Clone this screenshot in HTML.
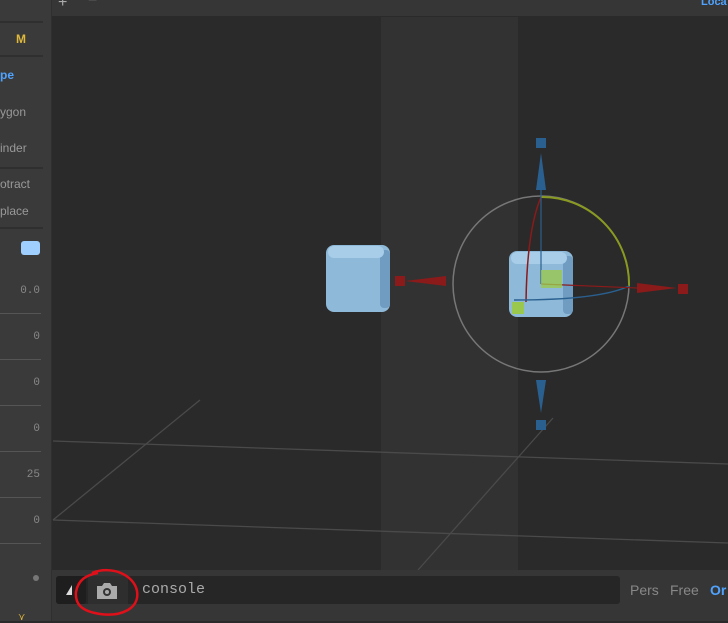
<!DOCTYPE html>
<html><head><style>
body{margin:0;width:728px;height:621px;overflow:hidden;background:#2a2a2a;font-family:"Liberation Sans",sans-serif;position:relative}
.a{position:absolute}
.side{left:0;top:0;width:51px;height:621px;background:#3a3a3a;border-right:1px solid #2f2f2f}
.sep{position:absolute;left:0;width:43px;height:2px;background:#2f2f2f}
.sep2{position:absolute;left:0;width:41px;height:1px;background:#555}
.n{position:absolute;right:11px;color:#888;font-size:11px;font-family:"Liberation Mono",monospace}
</style></head><body>
<div class="a side">
<div class="sep" style="top:21px"></div>
<div class="a" style="left:16px;top:32px;color:#e0b83a;font-size:12px;font-weight:bold">M</div>
<div class="sep" style="top:55px"></div>
<div class="a" style="left:0;top:68px;color:#4fa3ff;font-size:12px;font-weight:bold">pe</div>
<div class="a" style="left:0;top:105px;color:#999;font-size:12px">ygon</div>
<div class="a" style="left:0;top:141px;color:#999;font-size:12px">inder</div>
<div class="sep" style="top:167px"></div>
<div class="a" style="left:0;top:177px;color:#999;font-size:12px">otract</div>
<div class="a" style="left:0;top:204px;color:#999;font-size:12px">place</div>
<div class="sep" style="top:227px"></div>
<div class="a" style="left:21px;top:241px;width:19px;height:14px;background:#9fcfff;border-radius:3px"></div>
<div class="n" style="top:285px">0.0</div>
<div class="sep2" style="top:313px"></div>
<div class="n" style="top:331px">0</div>
<div class="sep2" style="top:359px"></div>
<div class="n" style="top:377px">0</div>
<div class="sep2" style="top:405px"></div>
<div class="n" style="top:423px">0</div>
<div class="sep2" style="top:451px"></div>
<div class="n" style="top:469px">25</div>
<div class="sep2" style="top:497px"></div>
<div class="n" style="top:515px">0</div>
<div class="sep2" style="top:543px"></div>
<div class="a" style="left:33px;top:575px;width:6px;height:6px;border-radius:50%;background:#777"></div>
<div class="a" style="left:18px;top:612px;color:#e0b83a;font-size:10px">⋎</div>
</div>
<div class="a" style="left:52px;top:0;width:676px;height:16px;background:#363636"></div>
<div class="a" style="left:58px;top:-6px;color:#aaa;font-size:16px">+</div>
<div class="a" style="left:88px;top:-8px;color:#aaa;font-size:16px">−</div>
<div class="a" style="left:701px;top:-4px;color:#4fa3ff;font-size:11px;font-weight:bold">Loca</div>
<div class="a" style="left:381px;top:17px;width:137px;height:553px;background:#323232"></div>
<svg class="a" style="left:0;top:0" width="728" height="621">
<g stroke="#4a4a4a" stroke-width="1.3" fill="none">
<line x1="53" y1="441" x2="728" y2="464"/>
<line x1="53" y1="520" x2="728" y2="543"/>
<line x1="53" y1="520" x2="200" y2="400"/>
<line x1="418" y1="570" x2="553" y2="418"/>
</g>
<rect x="326" y="245" width="64" height="67" rx="8" fill="#8fb9d8"/>
<rect x="380" y="250" width="10" height="58" rx="4" fill="#6f9cc0"/>
<rect x="328" y="246" width="56" height="12" rx="6" fill="#a8cde8"/>
<rect x="395" y="276" width="10" height="10" fill="#8b1a1a"/>
<polygon points="405,281 446,276 446,286" fill="#8b1a1a"/>
<circle cx="541" cy="284" r="88" stroke="#777" stroke-width="1.5" fill="none"/>
<rect x="509" y="251" width="64" height="66" rx="8" fill="#8fb9d8"/>
<rect x="563" y="256" width="10" height="58" rx="4" fill="#6f9cc0"/>
<rect x="511" y="252" width="56" height="12" rx="6" fill="#a8cde8"/>
<path d="M541 197 A87 87 0 0 1 629 286" stroke="#8a9a20" stroke-width="2" fill="none"/>
<path d="M541 197 Q527 230 526 302" stroke="#8b1a1a" stroke-width="1.5" fill="none"/>
<path d="M514 300 Q600 300 629 286" stroke="#2a6090" stroke-width="1.5" fill="none"/>
<line x1="541" y1="190" x2="541" y2="284" stroke="#2a6090" stroke-width="1.2"/>
<line x1="541" y1="284" x2="637" y2="288" stroke="#8b1a1a" stroke-width="1.2"/>
<polygon points="541,270 562,270 562,288 541,288" fill="#9ac84e" opacity="0.8"/>
<polygon points="512,302 524,302 524,314 512,314" fill="#9ac84e"/>
<rect x="536" y="138" width="10" height="10" fill="#2a6090"/>
<polygon points="541,153 536,190 546,190" fill="#2a6090"/>
<polygon points="541,413 536,380 546,380" fill="#2a6090"/>
<rect x="536" y="420" width="10" height="10" fill="#2a6090"/>
<polygon points="677,288 637,283 637,293" fill="#8b1a1a"/>
<rect x="678" y="284" width="10" height="10" fill="#8b1a1a"/>
</svg>
<div class="a" style="left:52px;top:570px;width:676px;height:51px;background:#363636"></div>
<div class="a" style="left:56px;top:576px;width:564px;height:28px;background:#262626;border-radius:3px"></div>
<div class="a" style="left:56px;top:576px;width:30px;height:28px;background:#1e1e1e;border-radius:3px"></div>
<svg class="a" style="left:64px;top:584px" width="12" height="12"><polygon points="2,11 8,1 8,11" fill="#ddd"/></svg>
<div class="a" style="left:88px;top:576px;width:40px;height:28px;background:#2e2e2e"></div>
<svg class="a" style="left:96px;top:581px" width="22" height="19"><path d="M1 5h5l2-3h6l2 3h5v13H1z" fill="#aaa"/><circle cx="11" cy="11" r="4" fill="#333"/><circle cx="11" cy="11" r="2" fill="#aaa"/></svg>
<svg class="a" style="left:70px;top:565px" width="72" height="56"><path d="M22 8 C42 0 64 10 67 26 C70 44 50 52 30 49 C10 46 5 38 6 27 C8 15 16 10 28 8" stroke="#e0101a" stroke-width="2.5" fill="none"/></svg>
<div class="a" style="left:142px;top:581px;color:#aaa;font-size:15px;font-family:'Liberation Mono',monospace">console</div>
<div class="a" style="left:630px;top:582px;color:#888;font-size:14px">Pers</div>
<div class="a" style="left:670px;top:582px;color:#888;font-size:14px">Free</div>
<div class="a" style="left:710px;top:582px;color:#4fa3ff;font-size:14px;font-weight:bold">Or</div>
</body></html>
